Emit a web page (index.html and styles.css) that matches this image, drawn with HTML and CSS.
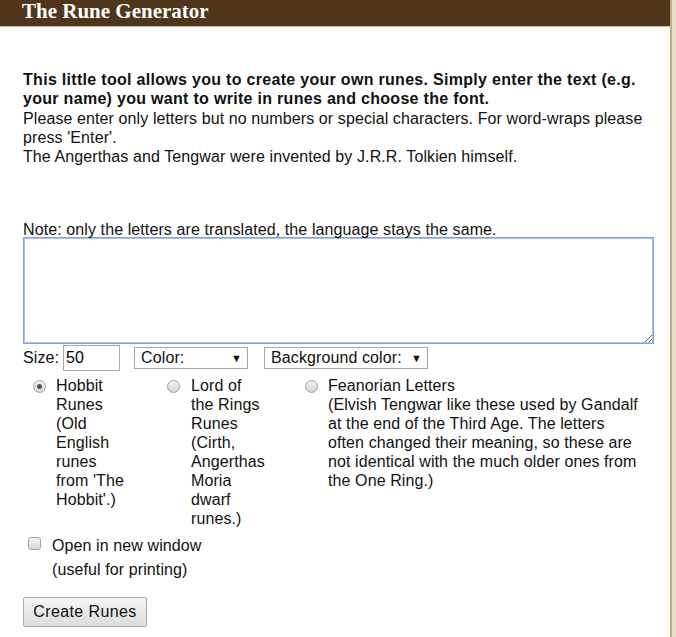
FILE: index.html
```html
<!DOCTYPE html>
<html>
<head>
<meta charset="utf-8">
<title>The Rune Generator</title>
<link rel="stylesheet" href="styles.css">
</head>
<body>
<div class="page">
  <header class="topbar"><h1 class="title">The Rune Generator</h1></header>
  <main class="content">
    <p class="intro"><b class="lead">This little tool allows you to create your own runes. Simply enter the text (e.g. your name) you want to write in runes and choose the font.</b><br>
    Please enter only letters but no numbers or special characters. For word-wraps please press 'Enter'.<br>
    The Angerthas and Tengwar were invented by J.R.R. Tolkien himself.</p>
    <p class="note">Note: only the letters are translated, the language stays the same.</p>
    <textarea class="textbox"></textarea>
    <div class="options">
      <label class="size-label">Size: <input class="size-input" type="text" value="50"></label>
      <span class="select-wrap color-select"><span class="select-text">Color:</span><span class="arrow">▼</span></span>
      <span class="select-wrap bg-select"><span class="select-text">Background color:</span><span class="arrow">▼</span></span>
    </div>
    <div class="fonts">
      <div class="font-opt col1">
        <span class="radio checked"></span>
        <span class="font-text w1">Hobbit Runes (Old English runes from 'The Hobbit'.)</span>
      </div>
      <div class="font-opt col2">
        <span class="radio"></span>
        <span class="font-text w2">Lord of the Rings Runes (Cirth, Angerthas Moria dwarf runes.)</span>
      </div>
      <div class="font-opt col3">
        <span class="radio"></span>
        <span class="font-text w3">Feanorian Letters<br>(Elvish Tengwar like these used by Gandalf at the end of the Third Age. The letters often changed their meaning, so these are not identical with the much older ones from the One Ring.)</span>
      </div>
    </div>
    <div class="newwin">
      <span class="checkbox"></span>
      <span class="newwin-text">Open in new window<br><span class="small-gap">(useful for printing)</span></span>
    </div>
    <button class="create-btn" type="button">Create Runes</button>
  </main>
</div>
</body>
</html>
```
FILE: styles.css
```css
html, body {
  margin: 0;
  padding: 0;
}
body {
  background: #e9dfc6;
  font-family: "Liberation Sans", Arial, sans-serif;
  font-size: 16px;
  letter-spacing: 0.1px;
  color: #111;
}
.page {
  width: 670px;
  min-height: 637px;
  background: #fff;
  border-right: 2px solid #bfae8a;
}
.topbar {
  height: 26px;
  background: #4f3519;
  border-bottom: 1px solid #c9b991;
  padding-left: 22px;
}
.title {
  margin: 0;
  font-family: "Liberation Serif", "Times New Roman", serif;
  font-weight: bold;
  font-size: 21px;
  line-height: 22px;
  letter-spacing: 0;
  color: #fff;
}
.content {
  padding: 0 0 0 23px;
}
.intro {
  margin: 43px 0 0;
  line-height: 19.3px;
  width: 630px;
}
.lead {
  letter-spacing: 0.3px;
}
.note {
  margin: 54px 0 0;
  line-height: 19px;
}
.textbox {
  display: block;
  box-sizing: border-box;
  width: 631px;
  height: 107px;
  margin: -2px 0 0;
  border: 1px solid #7ea4d8;
  outline: 1px solid #a8c2e8;
  outline-offset: -2px;
  resize: both;
  font-family: inherit;
}
.options {
  display: flex;
  align-items: center;
  height: 26px;
  margin-top: 1px;
}
.size-label {
  display: flex;
  align-items: center;
}
.size-input {
  box-sizing: border-box;
  width: 57px;
  height: 26px;
  margin-left: 4px;
  padding: 0 2px;
  border: 1px solid #a9a9a9;
  font-family: inherit;
  font-size: 16px;
}
.select-wrap {
  display: inline-flex;
  align-items: center;
  justify-content: space-between;
  box-sizing: border-box;
  height: 22px;
  border: 1px solid #a6a6a6;
  padding: 0 5px 0 6px;
  background: #fff;
}
.color-select {
  width: 114px;
  margin-left: 14px;
}
.bg-select {
  width: 164px;
  margin-left: 16px;
}
.arrow {
  font-size: 11px;
}
.fonts {
  display: flex;
  margin-top: 5px;
  line-height: 19px;
}
.font-opt {
  display: flex;
  align-items: flex-start;
}
.col1 {
  width: 134px;
  padding-left: 10px;
  box-sizing: border-box;
}
.col2 {
  width: 138px;
  padding-left: 10px;
  box-sizing: border-box;
}
.col3 {
  padding-left: 10px;
}
.radio {
  flex: none;
  width: 13px;
  height: 13px;
  margin-top: 4px;
  border-radius: 50%;
  box-sizing: border-box;
  border: 1px solid #a2a2a2;
  background: linear-gradient(#f2f2f2, #d6d6d6);
  position: relative;
}
.radio.checked::after {
  content: "";
  position: absolute;
  left: 3px;
  top: 3px;
  width: 5px;
  height: 5px;
  border-radius: 50%;
  background: #555;
}
.font-text {
  display: block;
  margin-left: 10px;
}
.col2 .font-text {
  margin-left: 11px;
}
.w1 { width: 72px; }
.w2 { width: 75px; }
.w3 { width: 313px; }
.newwin {
  display: flex;
  align-items: flex-start;
  margin-top: 8px;
  padding-left: 5px;
}
.checkbox {
  flex: none;
  width: 13px;
  height: 13px;
  margin-top: 1px;
  box-sizing: border-box;
  border: 1px solid #a0a0a0;
  border-radius: 3px;
  background: linear-gradient(#f4f4f4, #d8d8d8);
}
.newwin-text {
  display: block;
  margin-left: 11px;
  line-height: 19px;
}
.small-gap {
  display: inline-block;
  margin-top: 5px;
}
.create-btn {
  display: block;
  margin-top: 18px;
  box-sizing: border-box;
  width: 124px;
  height: 30px;
  border: 1px solid #a9a9a9;
  border-radius: 2px;
  background: linear-gradient(#f6f6f6, #dcdcdc);
  font-family: inherit;
  font-size: 16px;
  letter-spacing: 0.4px;
  color: #111;
  padding: 0;
}
```
